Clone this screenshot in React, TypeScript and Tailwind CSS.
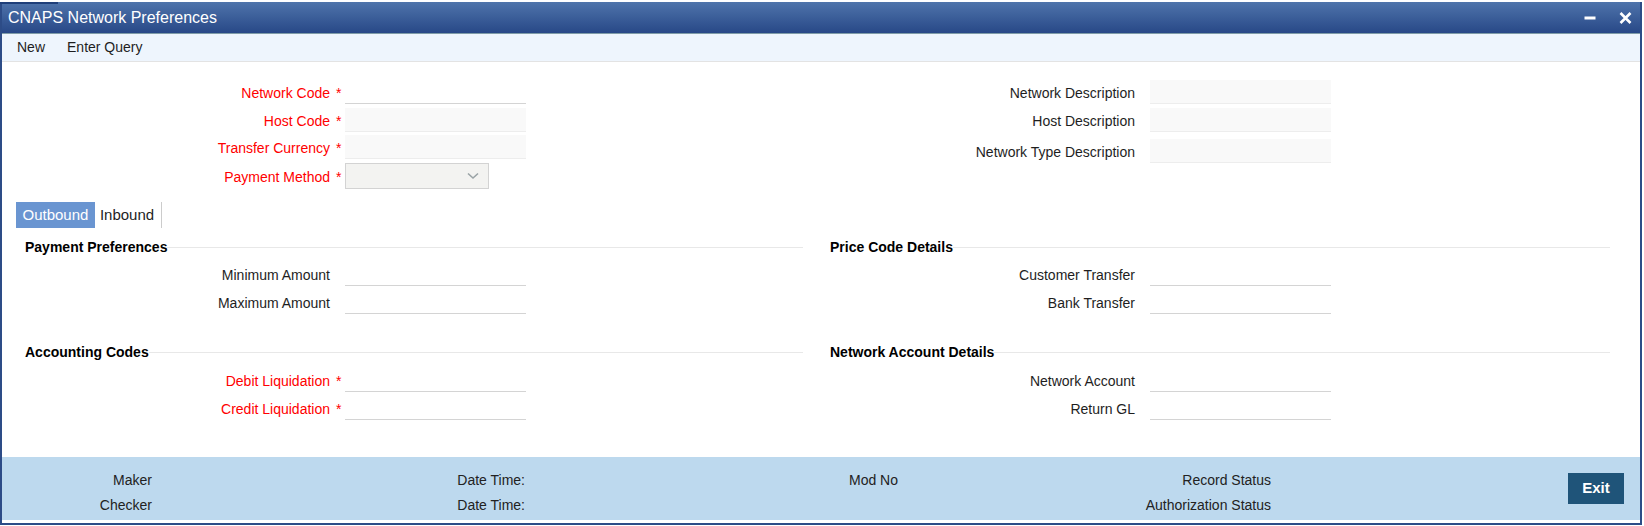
import React from "react";

type Kind = "line" | "ro" | "select";

// one label + input row, label column is 305px wide in every block
function Field({ label, req = false, kind = "line", className = "" }: { label: string; req?: boolean; kind?: Kind; className?: string }) {
  return (
    <div className={`flex items-center ${className}`}>
      <span className={`w-[305px] translate-y-[1px] text-right text-[14px] leading-none ${req ? "text-[#ff0000]" : "text-[#1e1e1e]"}`}>{label}</span>
      <span className="w-[15px] translate-y-[1px] pl-[6px] text-[14px] leading-none text-[#ff0000]">{req ? "*" : ""}</span>
      {kind === "line" && <div className="h-[24px] w-[181px] border-b border-[#d4d4d4] bg-white" />}
      {kind === "ro" && <div className="h-[24px] w-[181px] border-b border-[#ededed] bg-[#f9f9f9]" />}
      {kind === "select" && (
        <div className="flex h-[26px] w-[144px] items-center justify-end border border-[#d3d3d3] bg-[#f3f3f1] pr-[9px]">
          <svg width="12" height="8" viewBox="0 0 12 8" fill="none">
            <path d="M1 1.5 L6 6 L11 1.5" stroke="#9aa3a6" strokeWidth="1.6" />
          </svg>
        </div>
      )}
    </div>
  );
}

function SectionHead({ title, className = "" }: { title: string; className?: string }) {
  return (
    <div className={`flex h-[20px] items-center ${className}`}>
      <span className="text-[14px] font-bold leading-none text-black">{title}</span>
      <div className="h-px flex-1 bg-[#e8e8e8]" />
    </div>
  );
}

function FooterCell({ label }: { label: string }) {
  return (
    <div className="w-[373px]">
      <div className="w-[150px] text-right">{label}</div>
    </div>
  );
}

export default function App() {
  return (
    <div className="relative h-[526px] w-[1644px] bg-white font-['Liberation_Sans',Arial,sans-serif]">
      {/* selected tab marker at the very top */}
      <div className="absolute left-0 top-0 h-[2px] w-[58px] bg-[#1f3f7a]" />

      <div className="mt-[2px] flex h-[523px] w-[1642px] flex-col border-x-2 border-b-2 border-[#2d4c87]">
        {/* title bar */}
        <div className="flex h-[31px] items-center justify-between bg-gradient-to-b from-[#4f74ab] to-[#284887] pl-[6px] pr-[8px]">
          <span className="text-[16px] text-white">CNAPS Network Preferences</span>
          <div className="flex items-center gap-[23px]">
            <svg width="12" height="4" viewBox="0 0 12 4">
              <rect x="0.5" y="0.5" width="11" height="3" fill="#fff" />
            </svg>
            <svg width="13" height="12" viewBox="0 0 13 12">
              <path d="M1.5 1 L11.5 11 M11.5 1 L1.5 11" stroke="#fff" strokeWidth="2.6" />
            </svg>
          </div>
        </div>
        <div className="h-px bg-[#7f9ca8]" />

        {/* toolbar */}
        <div className="flex h-[28px] items-center gap-[22px] border-b border-[#e3e3e3] bg-[#eef5fd] pl-[15px] text-[14px] text-[#1e1e1e]">
          <span>New</span>
          <span>Enter Query</span>
        </div>

        {/* form body */}
        <div className="h-[395px]">
          <div className="grid grid-cols-[778px_780px] gap-x-[27px] pl-[23px]">
            <div className="flex flex-col pt-[18px]">
              <Field label="Network Code" req />
              <Field label="Host Code" req kind="ro" className="mt-[4px]" />
              <Field label="Transfer Currency" req kind="ro" className="mt-[3px]" />
              <Field label="Payment Method" req kind="select" className="mt-[4px]" />
            </div>
            <div className="flex flex-col pt-[18px]">
              <Field label="Network Description" kind="ro" />
              <Field label="Host Description" kind="ro" className="mt-[4px]" />
              <Field label="Network Type Description" kind="ro" className="mt-[7px]" />
            </div>
          </div>

          {/* tabs */}
          <div className="mt-[13px] flex h-[26px] items-stretch pl-[14px] text-[15px]">
            <div className="flex items-center bg-[#6a95d1] px-[6.5px] text-white">Outbound</div>
            <div className="flex items-center px-[5px] text-[#1e1e1e]">Inbound</div>
            <div className="ml-[2px] w-px bg-[#cccccc]" />
          </div>

          <div className="mt-[9px] grid grid-cols-[778px_780px] gap-x-[27px] pl-[23px]">
            <div className="flex flex-col">
              <SectionHead title="Payment Preferences" />
              <Field label="Minimum Amount" className="mt-[5px]" />
              <Field label="Maximum Amount" className="mt-[4px]" />
              <SectionHead title="Accounting Codes" className="mt-[28px]" />
              <Field label="Debit Liquidation" req className="mt-[6px]" />
              <Field label="Credit Liquidation" req className="mt-[4px]" />
            </div>
            <div className="flex flex-col">
              <SectionHead title="Price Code Details" />
              <Field label="Customer Transfer" className="mt-[5px]" />
              <Field label="Bank Transfer" className="mt-[4px]" />
              <SectionHead title="Network Account Details" className="mt-[28px]" />
              <Field label="Network Account" className="mt-[6px]" />
              <Field label="Return GL" className="mt-[4px]" />
            </div>
          </div>
        </div>

        {/* footer */}
        <div className="flex h-[63px] bg-[#bdd9ee] text-[14px] text-[#222]">
          <div className="flex flex-col gap-[5px] pt-[13px]">
            <div className="flex h-[20px] items-center">
              <FooterCell label="Maker" />
              <FooterCell label="Date Time:" />
              <FooterCell label="Mod No" />
              <FooterCell label="Record Status" />
            </div>
            <div className="flex h-[20px] items-center">
              <FooterCell label="Checker" />
              <FooterCell label="Date Time:" />
              <FooterCell label="" />
              <FooterCell label="Authorization Status" />
            </div>
          </div>
          <button className="ml-auto mr-[16px] mt-[16px] h-[31px] w-[56px] bg-[#1f5479] text-[15px] font-bold text-white">
            Exit
          </button>
        </div>
        <div className="h-[2px] bg-white" />
      </div>
    </div>
  );
}
